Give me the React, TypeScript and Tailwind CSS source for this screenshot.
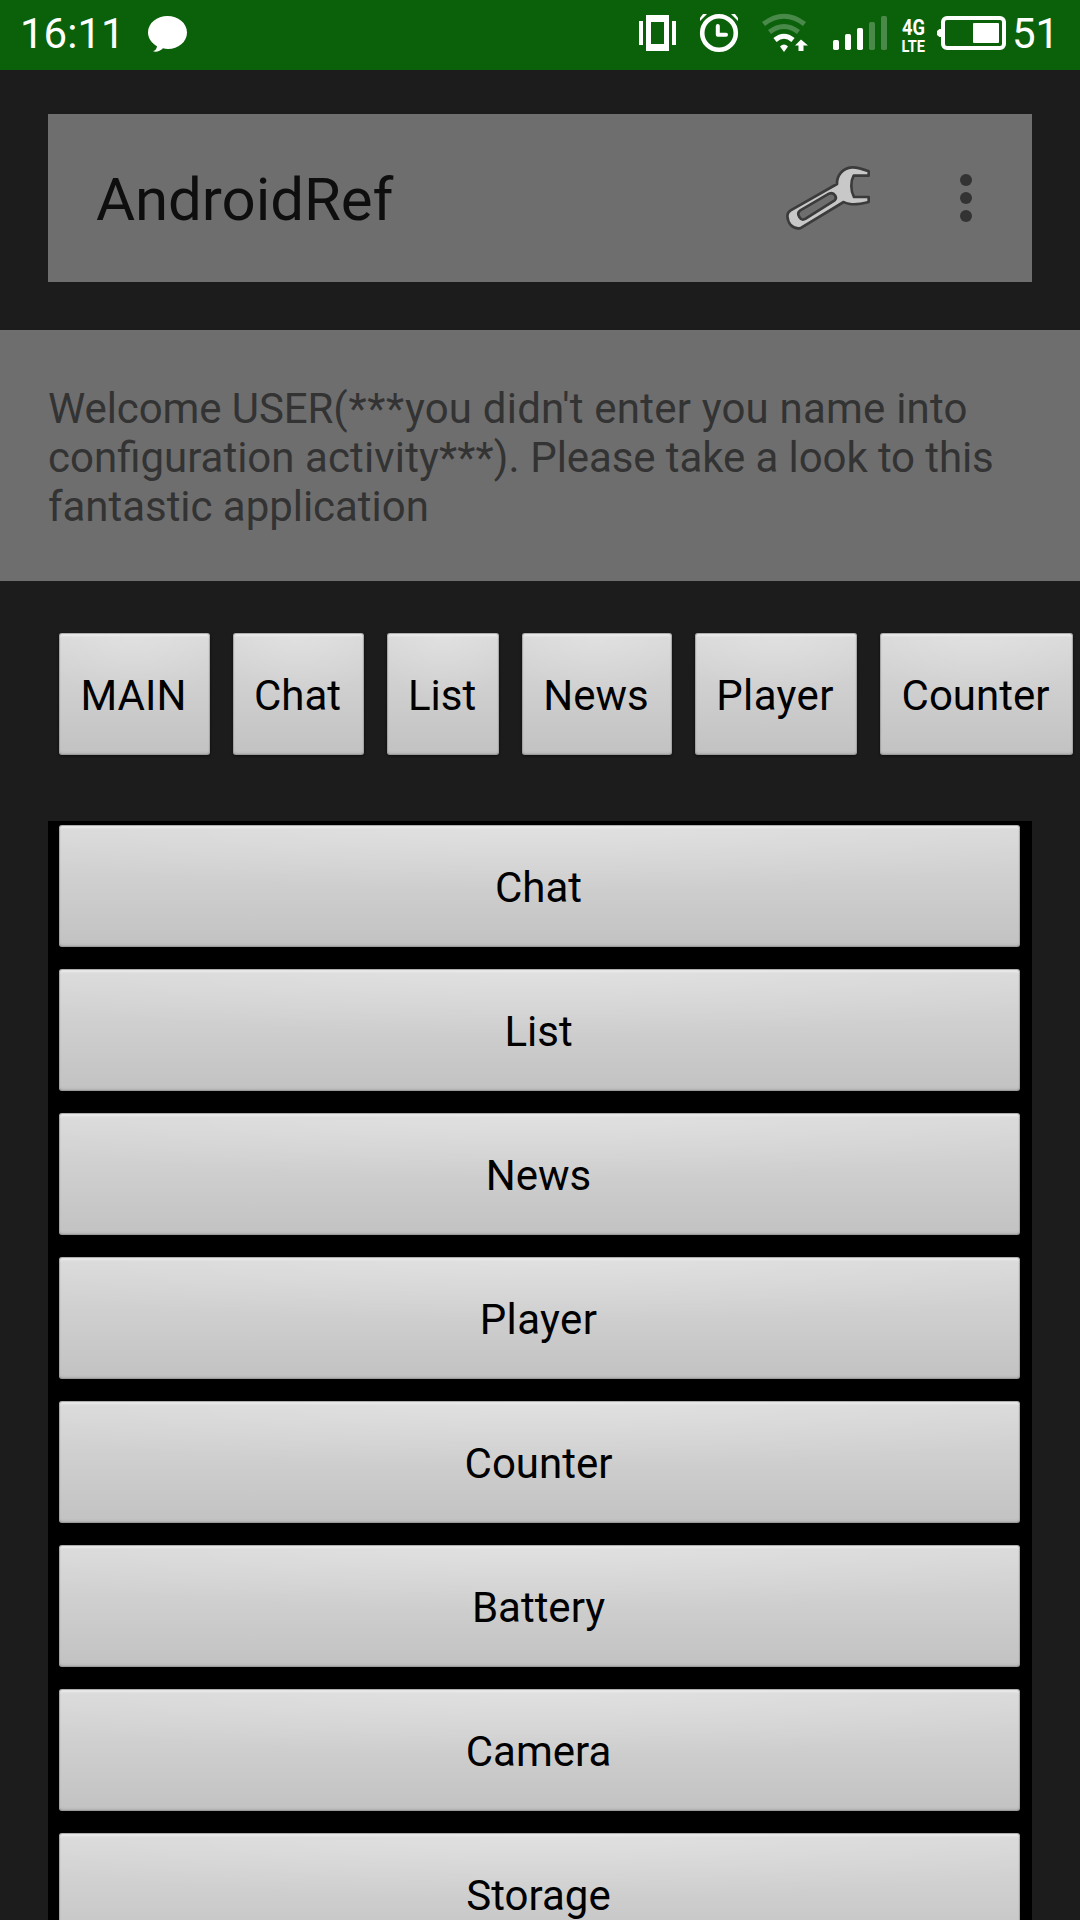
import React from "react";

const tabs = [
  { label: "MAIN", width: "w-[151px]" },
  { label: "Chat", width: "w-[131px]" },
  { label: "List", width: "w-[112px]" },
  { label: "News", width: "w-[150px]" },
  { label: "Player", width: "w-[162px]" },
  { label: "Counter", width: "w-[193px]" },
];

const entries = ["Chat", "List", "News", "Player", "Counter", "Battery", "Camera", "Storage"];

const face =
  "flex h-[122px] shrink-0 items-center justify-center rounded-[3px] pt-[3px] pr-[2px] text-[42px] leading-[49px] text-black bg-[radial-gradient(ellipse_65%_55%_at_50%_0%,rgba(255,255,255,0.2),rgba(255,255,255,0)),linear-gradient(to_bottom,#dadada,#c2c2c2)] shadow-[inset_0_0_1px_1px_rgba(145,145,145,0.75),inset_0_3px_2px_#ececec,inset_0_-2px_2px_rgba(160,160,160,0.5),0_1px_3px_rgba(0,0,0,0.55)]";

function Label({ text }: { text: string }) {
  return <span className={text === "Player" ? "tracking-[0.35px]" : ""}>{text}</span>;
}

function StatusIcons() {
  return (
    <svg className="block h-[70px] w-[380px]" viewBox="636 0 380 70" fill="white">
      <path d="M639 21h4v24h-4zM672 21h4v24h-4zM646 15h23v36h-23zM651 22v22h13V22z" fillRule="evenodd" />
      <g fill="none" stroke="white">
        <circle cx="719" cy="33" r="16.8" strokeWidth="4.6" />
        <path d="M717.8 26v8.8h8.2" strokeWidth="4" strokeLinecap="round" strokeLinejoin="round" />
      </g>
      <path d="M700 21v-3l3-4h4zM738 21v-3l-3-4h-4z" />
      <g fill="none" strokeWidth="5">
        <path d="M763.5 24Q784 8.500 804.500 24" stroke="#49894a" />
        <path d="M769.500 32Q784 21 798.500 32" stroke="#49894a" />
        <path d="M775 40Q784 32.500 793 40" stroke="white" />
      </g>
      <path d="M780 46.500Q784 42.500 788 46.500L784 52zM801 39.500l7 6h-4.500v5.500h-5v-5.500H795z" />
      <rect x="833" y="40" width="6" height="10" rx="1.700" />
      <rect x="845" y="34" width="6" height="16" rx="1.700" />
      <rect x="857" y="28" width="6" height="22" rx="1.700" />
      <rect x="869" y="22" width="6" height="28" rx="1.700" fill="#49894a" />
      <rect x="881" y="16" width="6" height="34" rx="1.700" fill="#49894a" />
      <text x="902" y="34.800" fontSize="22.500" fontWeight="700" textLength="23" lengthAdjust="spacingAndGlyphs">4G</text>
      <text x="901.500" y="52" fontSize="16" fontWeight="700" textLength="23.500" lengthAdjust="spacingAndGlyphs">LTE</text>
      <rect x="943" y="18" width="61" height="30" rx="4" fill="none" stroke="white" strokeWidth="4" />
      <path d="M941 29h-1.500l-2.500 2v4l2.500 2h1.500z" />
      <rect x="973" y="23" width="26" height="20" rx="1" />
    </svg>
  );
}

function Wrench() {
  return (
    <svg className="block h-[70px] w-[90px]" viewBox="69 69 270 210">
      <path
        d="M92 211L231 132C230 108 247 84 276 82Q293 81 326 94V107H281Q274 119 274 138Q274 157 282 171H326V186Q290 195 270 192Q257 190 251 186L124 263Q108 270 92 255Q83 244 82 228Q83 216 92 211ZM121 211L207 161Q219 156 225 166Q231 175 224 181L137 236Q125 243 118 231Q110 218 121 211Z"
        fill="#c8c8c8"
        fillRule="evenodd"
        stroke="#3b3b3b"
        strokeWidth="8"
        strokeLinejoin="round"
      />
    </svg>
  );
}

export default function App() {
  return (
    <div className="flex h-[1920px] w-[1080px] flex-col overflow-hidden bg-[#1c1c1c] font-['Roboto',sans-serif]">
      <div className="flex h-[70px] shrink-0 items-center bg-[#0b610a] text-[42px] leading-[49px] text-white">
        <span className="ml-5 w-[127px] pb-[3px] whitespace-nowrap">16:11</span>
        <svg className="h-[38px] w-10" viewBox="0 0 40 38" fill="white">
          <path d="M20.500 0C31 0 40 7 40 16.500S31 33 21 33Q18 33 16 32.300C13 35.500 9 36.500 6 35.300Q9.500 34 10 30.200C4.500 27 1 22 1 16.500C1 7 10 0 20.500 0Z" />
        </svg>
        <div className="ml-auto flex items-center">
          <StatusIcons />
          <span className="-ml-[4px] w-[68px] pb-[3px]">51</span>
        </div>
      </div>

      <header className="mx-12 mt-11 flex h-[168px] shrink-0 items-center bg-[#6e6e6e]">
        <h1 className="ml-12 flex-1 pt-[4px] text-[60px] leading-[70px] tracking-[-0.08px] text-[#0e0e0e]">AndroidRef</h1>
        <Wrench />
        <div className="mr-[60px] ml-[87px] flex flex-col gap-1.5">
          <span className="size-3 rounded-full bg-[#333]" />
          <span className="size-3 rounded-full bg-[#333]" />
          <span className="size-3 rounded-full bg-[#333]" />
        </div>
      </header>

      <p className="mt-12 h-[251px] shrink-0 bg-[#6e6e6e] px-12 pt-[54px] text-[42px] leading-[49px] whitespace-nowrap text-[#333]">
        <span className="tracking-[-0.1px]">Welcome USER</span>
        <span className="tracking-[0.75px]">(***</span>
        <span className="tracking-[0.2px]">you didn't enter you name into</span>
        <br />
        configuration <span className="tracking-[0.15px]">activity***). </span>
        <span className="tracking-[-0.1px]">Please take a look to this</span>
        <br />
        <span className="tracking-[-0.04px]">fantastic application</span>
      </p>

      <nav className="mt-[52px] ml-[59px] flex shrink-0 gap-[23px]">
        {tabs.map((t) => (
          <button key={t.label} className={`${face} ${t.width}`}>
            <Label text={t.label} />
          </button>
        ))}
      </nav>

      <main className="mx-12 mt-[66px] flex h-[1200px] shrink-0 flex-col gap-[22px] bg-black pt-1 pr-3 pl-[11px]">
        {entries.map((e) => (
          <button key={e} className={`${face} w-full`}>
            <Label text={e} />
          </button>
        ))}
      </main>
    </div>
  );
}
